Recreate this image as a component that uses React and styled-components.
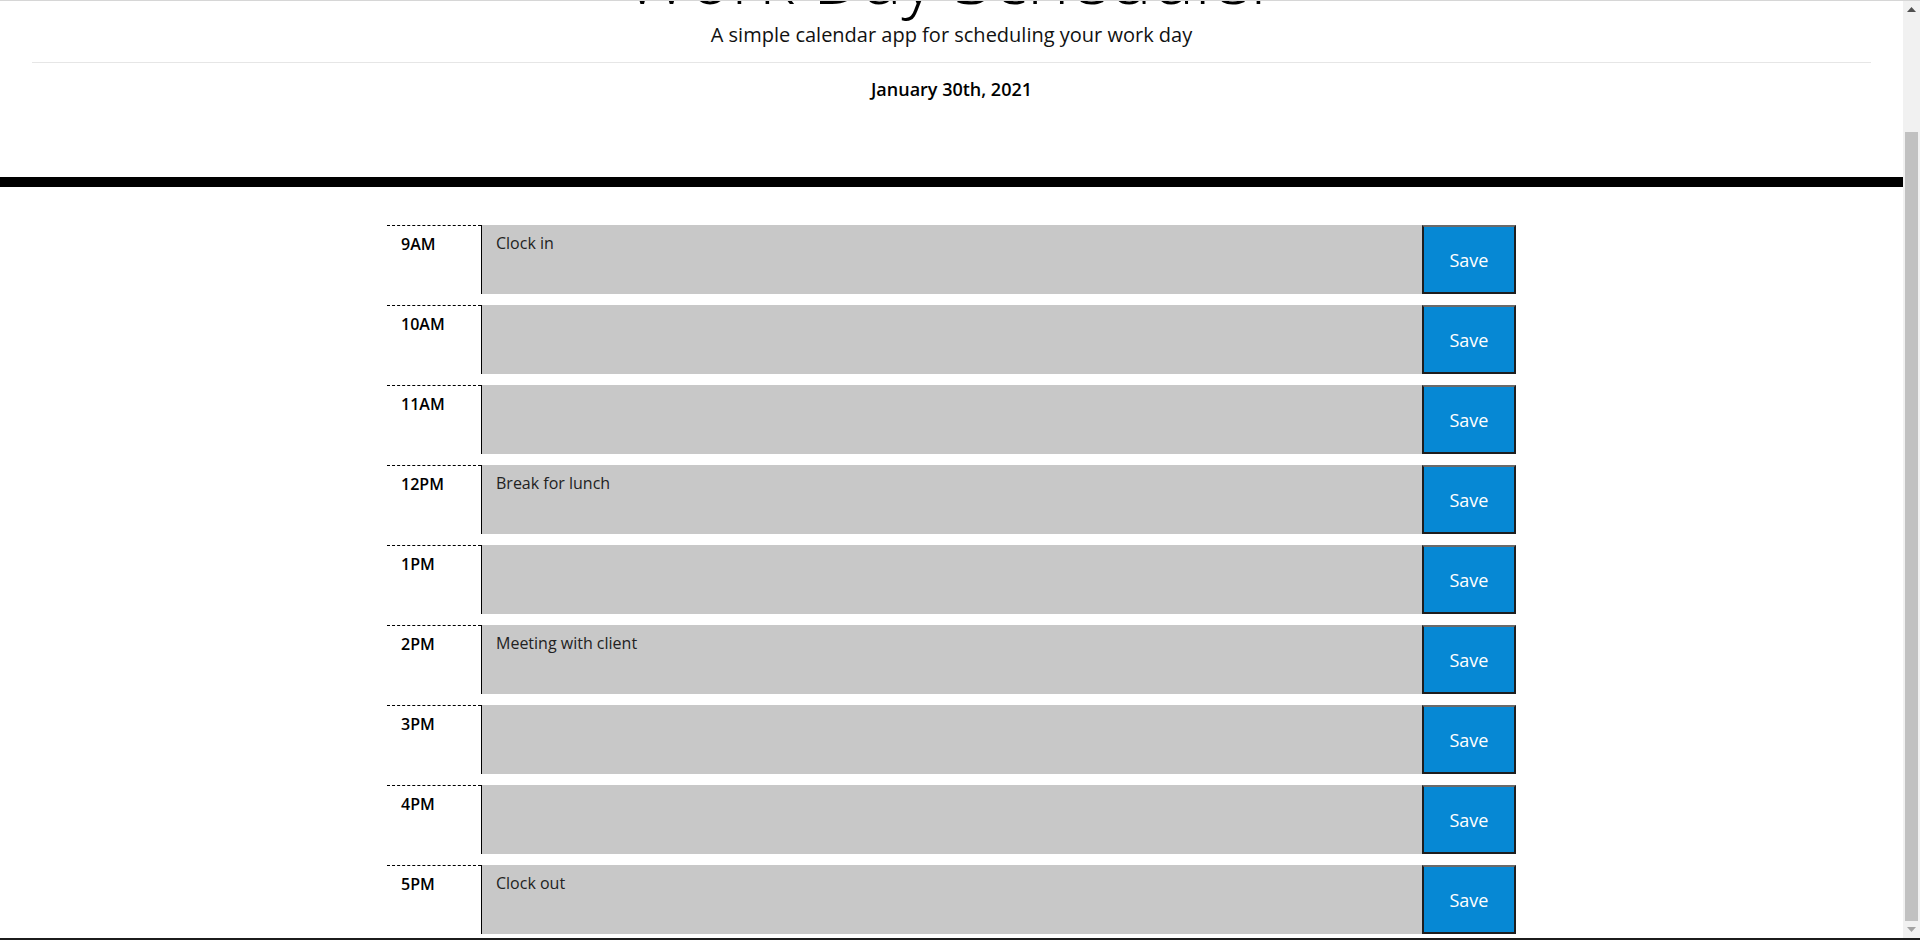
import React, { useLayoutEffect, useRef } from 'react';
import styled, { createGlobalStyle } from 'styled-components';

const GlobalStyle = createGlobalStyle`
  html, body {
    margin: 0;
    padding: 0;
    overflow: hidden;
    background: #fff;
  }
  body {
    font-family: "Open Sans", "Liberation Sans", sans-serif;
    color: #212529;
  }
`;

// Рамка окна
const Frame = styled.div`
  height: 940px;
  box-sizing: border-box;
  border-top: 1px solid #d6d6d6;
  border-bottom: 2px solid #1c1c1c;
  display: flex;
`;

// Прокручиваемая область (родная полоса скрыта, рисуем свою)
const Scroller = styled.div`
  flex: 1;
  min-width: 0;
  overflow-y: scroll;
  scrollbar-width: none;

  &::-webkit-scrollbar {
    display: none;
  }
`;

// Классическая полоса прокрутки
const Track = styled.div`
  width: 17px;
  flex: none;
  background: #f1f1f1;
  display: flex;
  flex-direction: column;
`;

const ArrowButton = styled.div`
  height: 17px;
  flex: none;
  display: flex;
  align-items: center;
  justify-content: center;
`;

const TrackGap = styled.div`
  flex: 1;
`;

const Thumb = styled.div`
  height: 789px;
  flex: none;
  margin: 0 2px;
  background: #c1c1c1;
`;

// Шапка
const Header = styled.header`
  padding: 65px 32px 74.5px;
  border-bottom: 10px solid #000;
  text-align: center;
`;

const Title = styled.h1`
  margin: 0;
  font-size: 72px;
  font-weight: 300;
  line-height: 1.2;
  color: #000;
`;

const Lead = styled.p`
  margin: 1px 0 0;
  font-size: 20px;
  line-height: 30px;
  font-weight: 400;
  color: #111;
`;

const Rule = styled.hr`
  margin: 12px 0 0;
  border: 0;
  border-top: 1px solid #e6e6e6;
`;

const CurrentDay = styled.p`
  margin: 12.5px 0 0;
  font-size: 18px;
  line-height: 27px;
  font-weight: 600;
  color: #000;
`;

// Список часов
const Main = styled.main`
  padding: 38px 0 4px;
`;

const RowList = styled.div`
  width: 1129px;
  margin: 0 auto;
  display: flex;
  flex-direction: column;
  gap: 11px;
`;

const Row = styled.div`
  display: flex;
  height: 69px;
`;

const Hour = styled.div`
  width: 94px;
  flex: none;
  box-sizing: border-box;
  border-top: 1px dashed #000;
  padding: 6px 0 0 14px;
  font-size: 16px;
  line-height: 24px;
  font-weight: 600;
  color: #000;
`;

const Note = styled.textarea`
  flex: 1;
  margin: 0;
  box-sizing: border-box;
  height: 100%;
  border: 0;
  border-left: 1px solid #000;
  border-radius: 0;
  background: #c8c8c8;
  padding: 6px 14px;
  font-family: "Open Sans", "Liberation Sans", sans-serif;
  font-size: 16px;
  line-height: 24px;
  color: #222;
  resize: none;
  outline: none;
  overflow: hidden;
`;

const SaveButton = styled.button`
  width: 94px;
  flex: none;
  box-sizing: border-box;
  height: 100%;
  margin: 0;
  padding: 0;
  border: 2px solid #1e1e1e;
  border-top-color: #6a6a6a;
  border-radius: 0;
  background: #0688d4;
  color: #fff;
  font-family: "Open Sans", "Liberation Sans", sans-serif;
  font-size: 18px;
  line-height: 1;
  cursor: pointer;
  display: flex;
  align-items: center;
  justify-content: center;
`;

const hours = [
  { label: '9AM', text: 'Clock in' },
  { label: '10AM', text: '' },
  { label: '11AM', text: '' },
  { label: '12PM', text: 'Break for lunch' },
  { label: '1PM', text: '' },
  { label: '2PM', text: 'Meeting with client' },
  { label: '3PM', text: '' },
  { label: '4PM', text: '' },
  { label: '5PM', text: 'Clock out' },
];

const App = () => {
  const scrollRef = useRef(null);

  useLayoutEffect(() => {
    const el = scrollRef.current;
    if (el) el.scrollTop = el.scrollHeight;
  }, []);

  return (
    <>
      <GlobalStyle />
      <Frame>
        <Scroller ref={scrollRef}>
          <Header>
            <Title>Work Day Scheduler</Title>
            <Lead>A simple calendar app for scheduling your work day</Lead>
            <Rule />
            <CurrentDay>January 30th, 2021</CurrentDay>
          </Header>
          <Main>
            <RowList>
              {hours.map((h) => (
                <Row key={h.label}>
                  <Hour>{h.label}</Hour>
                  <Note defaultValue={h.text} />
                  <SaveButton type="button">Save</SaveButton>
                </Row>
              ))}
            </RowList>
          </Main>
        </Scroller>
        <Track>
          <ArrowButton>
            <svg width="9" height="5" viewBox="0 0 9 5">
              <path d="M0 5 L4.5 0 L9 5 Z" fill="#505050" />
            </svg>
          </ArrowButton>
          <TrackGap />
          <Thumb />
          <ArrowButton>
            <svg width="9" height="5" viewBox="0 0 9 5">
              <path d="M0 0 L4.5 5 L9 0 Z" fill="#a3a3a3" />
            </svg>
          </ArrowButton>
        </Track>
      </Frame>
    </>
  );
};

export default App;
